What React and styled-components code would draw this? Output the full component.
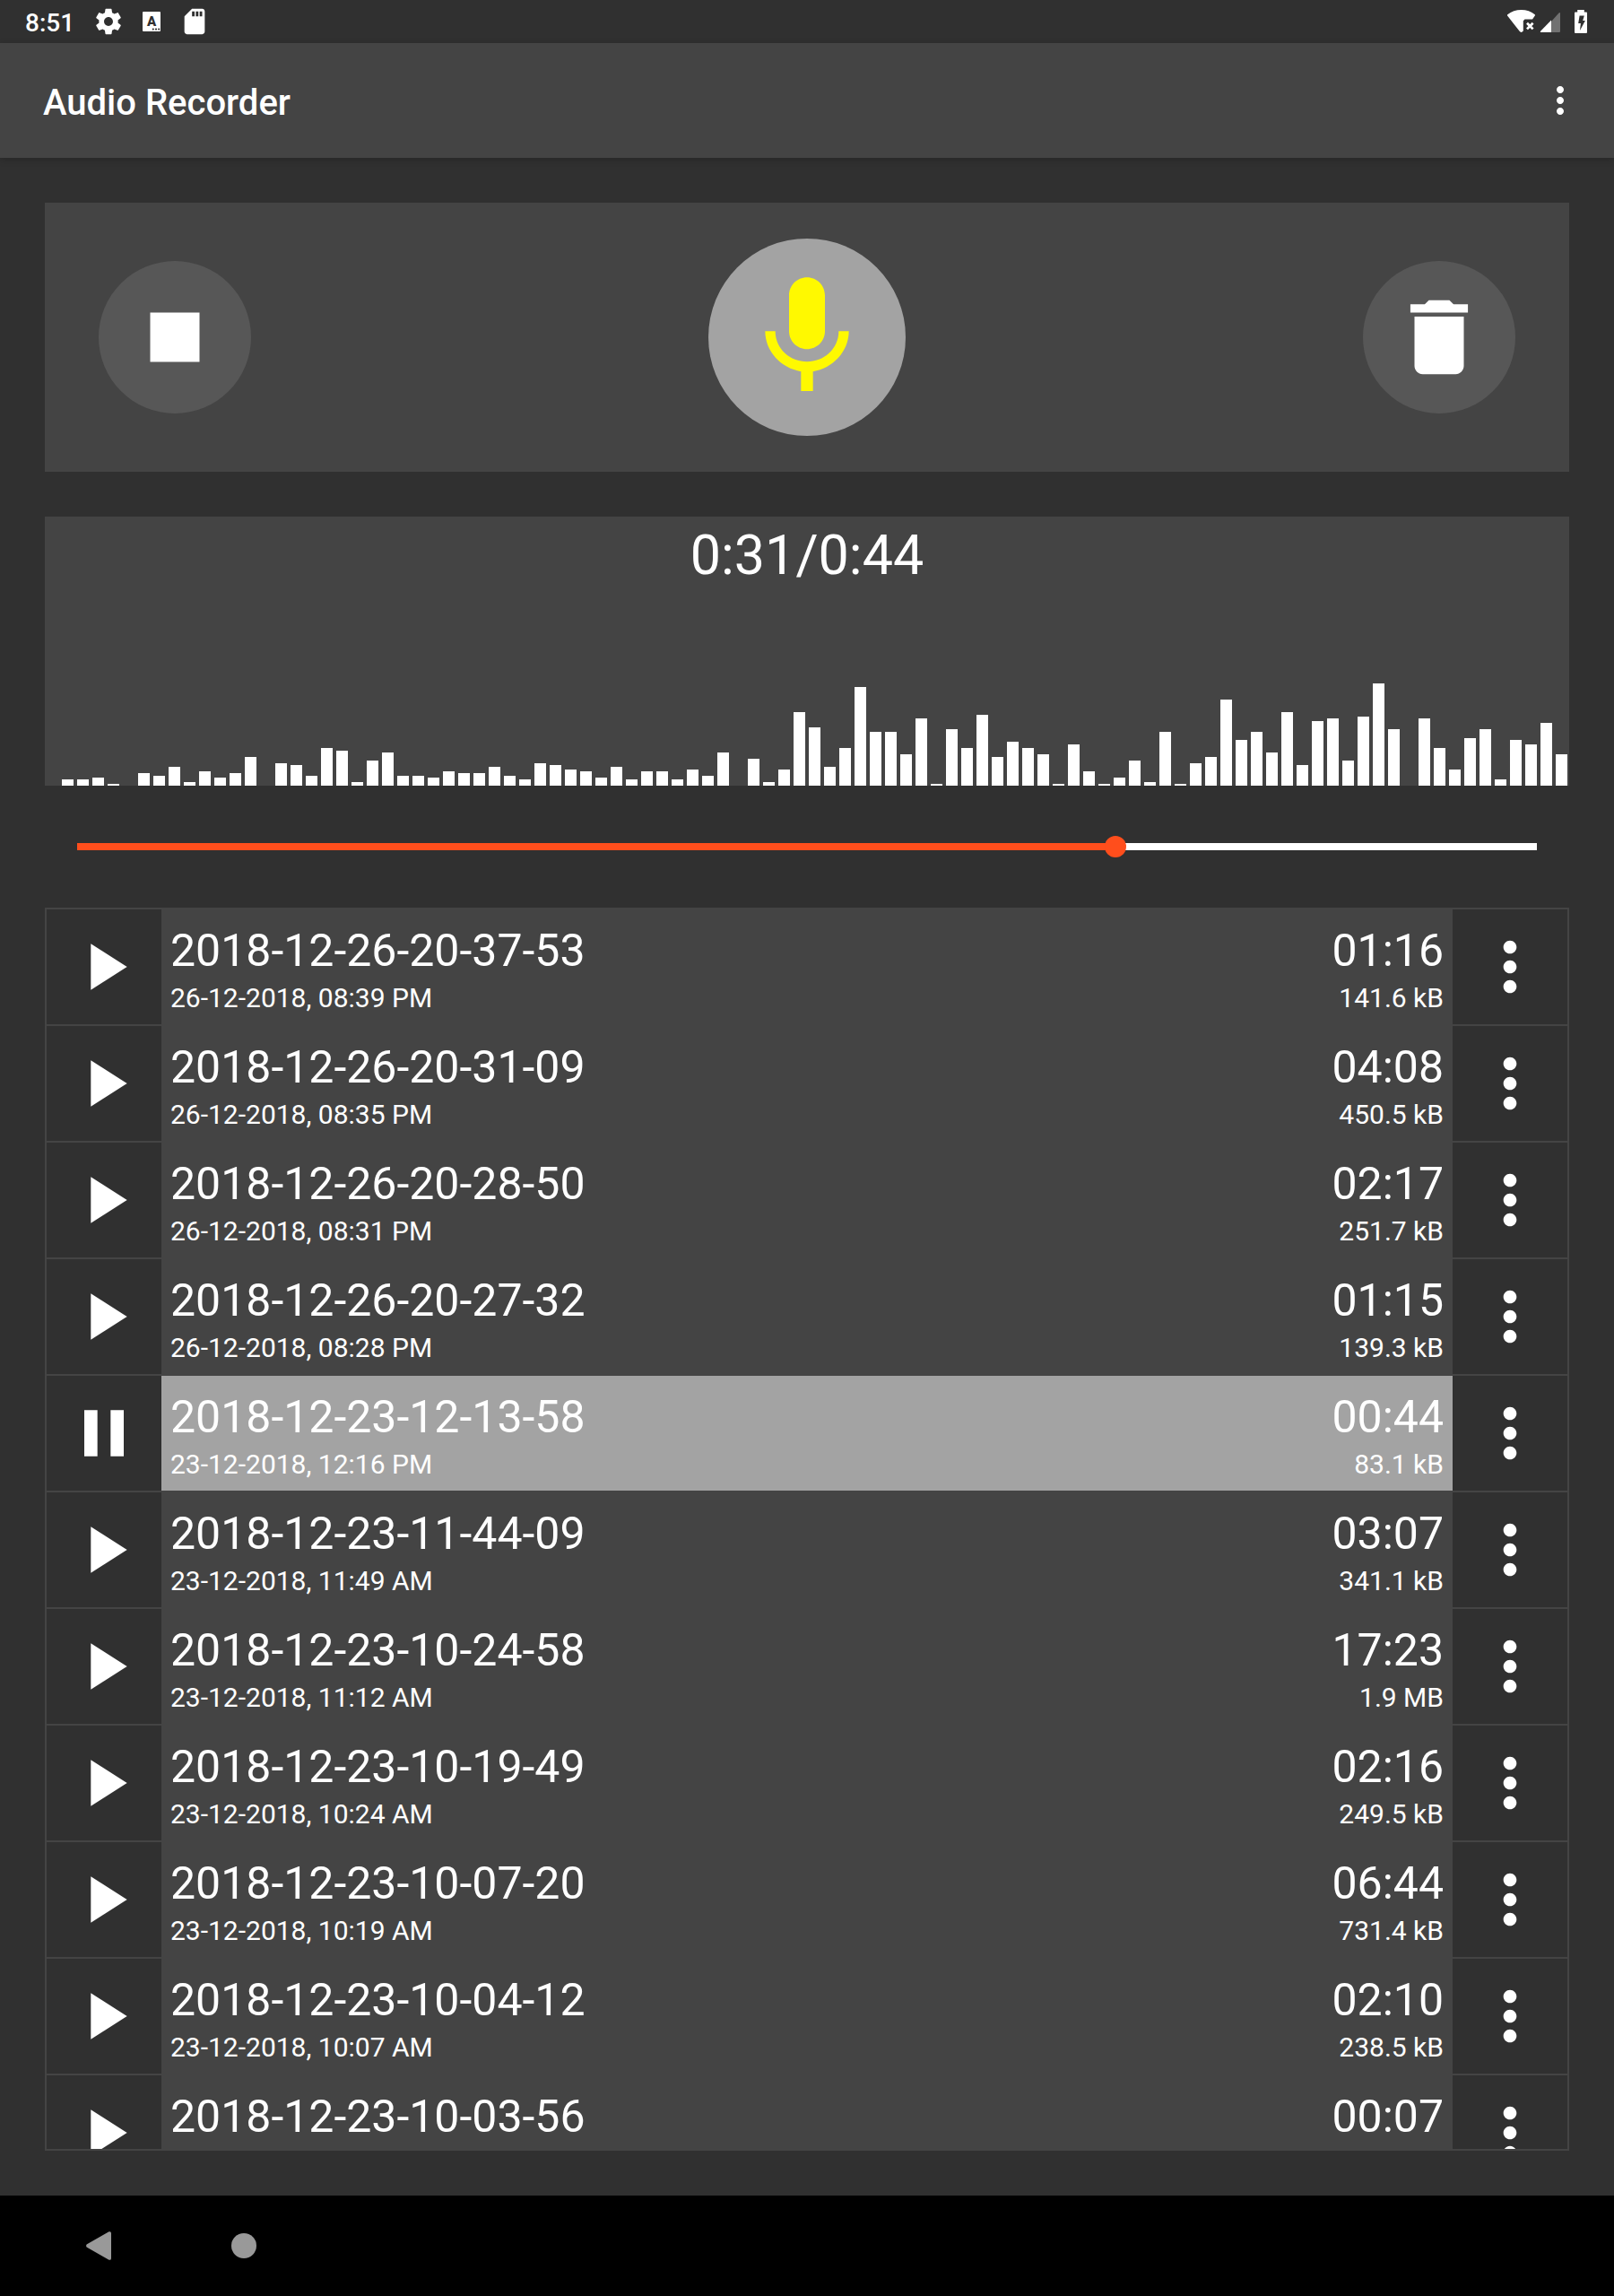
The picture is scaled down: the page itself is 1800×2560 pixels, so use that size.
import React, { useState } from "react";
import styled, { createGlobalStyle } from "styled-components";

const color = {
  page: "#303030",
  panel: "#444444",
  control: "#575757",
  active: "#a3a3a3",
  accent: "#ff4e1c",
  mic: "#fff900",
  text: "#ffffff",
};

const GlobalStyle = createGlobalStyle`
  *, *::before, *::after { box-sizing: border-box; }
  html, body { margin: 0; padding: 0; background: ${color.page}; }
  body { font-family: Roboto, "Liberation Sans", sans-serif; color: ${color.text}; }
  button { font: inherit; color: inherit; border: 0; padding: 0; margin: 0; background: none; cursor: pointer; }
  svg { display: block; }
`;

const Screen = styled.div`
  display: flex;
  flex-direction: column;
  height: 100vh;
  background: ${color.page};
`;

const StatusBar = styled.div`
  display: flex;
  align-items: center;
  justify-content: space-between;
  flex: none;
  height: 48px;
  padding: 0 20px 0 28px;
`;

const StatusGroup = styled.div`
  display: flex;
  align-items: center;
  gap: ${(p) => p.$gap}px;
`;

const Clock = styled.time`
  padding-right: 7px;
  padding-top: 3px;
  font-size: 28px;
  line-height: 32px;
  font-weight: 500;
`;

const AppBar = styled.header`
  display: flex;
  align-items: center;
  justify-content: space-between;
  flex: none;
  height: 128px;
  padding: 0 36px 0 48px;
  background: ${color.panel};
  box-shadow: 0 2px 8px rgba(0, 0, 0, 0.2);
`;

const Title = styled.h1`
  margin: 0;
  padding-top: 6px;
  font-size: 40px;
  line-height: 48px;
  font-weight: 500;
`;

const Content = styled.main`
  display: flex;
  flex-direction: column;
  flex: 1;
  min-height: 0;
  padding: 50px;
`;

const Controls = styled.section`
  display: flex;
  align-items: center;
  justify-content: space-between;
  flex: none;
  height: 300px;
  padding: 0 60px;
  background: ${color.panel};
`;

const RoundButton = styled.button`
  display: grid;
  place-items: center;
  width: ${(p) => p.$size}px;
  height: ${(p) => p.$size}px;
  border-radius: 50%;
  background: ${(p) => (p.$active ? color.active : color.control)};
  color: ${(p) => (p.$active ? color.mic : color.text)};
`;

const WavePanel = styled.section`
  display: flex;
  flex-direction: column;
  justify-content: space-between;
  flex: none;
  height: 300px;
  margin-top: 50px;
  padding: 7px 2px 0;
  background: ${color.panel};
`;

const Elapsed = styled.div`
  font-size: 61px;
  line-height: 72px;
  text-align: center;
`;

const Bars = styled.div`
  display: flex;
  align-items: flex-end;
  gap: 4px;
`;

const Bar = styled.span`
  flex: 1;
  background: ${color.text};
`;

const SeekArea = styled.div`
  display: flex;
  flex: none;
  padding: 56px 24px;
`;

const Seek = styled.input`
  appearance: none;
  width: 100%;
  height: 24px;
  margin: 0;
  background: none;
  --end: calc(12px + (100% - 24px) * var(--played));

  &::-webkit-slider-runnable-track {
    height: 8px;
    background: linear-gradient(
      to right,
      transparent 12px,
      ${color.accent} 12px,
      ${color.accent} var(--end),
      ${color.text} var(--end),
      ${color.text} calc(100% - 12px),
      transparent calc(100% - 12px)
    );
  }

  &::-webkit-slider-thumb {
    appearance: none;
    width: 24px;
    height: 24px;
    margin-top: -8px;
    border-radius: 50%;
    background: ${color.accent};
  }
`;

const List = styled.ul`
  flex: 1;
  min-height: 0;
  margin: 0;
  padding: 0;
  list-style: none;
  overflow-y: auto;
  scrollbar-width: none;
  border: 2px solid ${color.panel};
`;

const Row = styled.li`
  display: grid;
  grid-template-columns: 128px 1fr 128px;
  border-bottom: 2px solid ${color.panel};
`;

const CellButton = styled.button`
  display: grid;
  place-items: center;
  height: 128px;
`;

const Info = styled.div`
  display: flex;
  justify-content: space-between;
  padding: 16px 10px 0;
  background: ${(p) => (p.$active ? color.active : color.panel)};
`;

const Column = styled.div`
  display: flex;
  flex-direction: column;
  gap: 5px;
  text-align: ${(p) => p.$align};
`;

const Primary = styled.span`
  font-size: 50px;
  line-height: 60px;
`;

const Secondary = styled.span`
  font-size: 30px;
  line-height: 36px;
`;

const NavBar = styled.nav`
  display: flex;
  align-items: center;
  gap: 114px;
  flex: none;
  height: 112px;
  padding: 0 86px;
  background: #000000;
  color: #999999;
`;

const PATHS = {
  more: "M12 8c1.1 0 2-.9 2-2s-.9-2-2-2-2 .9-2 2 .9 2 2 2zm0 2c-1.1 0-2 .9-2 2s.9 2 2 2 2-.9 2-2-.9-2-2-2zm0 6c-1.1 0-2 .9-2 2s.9 2 2 2 2-.9 2-2-.9-2-2-2z",
  play: "M8 5v14l11-7z",
  pause: "M6 19h4V5H6v14zm8-14v14h4V5h-4z",
  stop: "M6 6h12v12H6z",
  mic: "M12 14c1.66 0 3-1.34 3-3V5c0-1.66-1.34-3-3-3S9 3.34 9 5v6c0 1.66 1.34 3 3 3zm5.3-3c0 3-2.54 5.1-5.3 5.1S6.7 14 6.7 11H5c0 3.41 2.72 6.23 6 6.72V21h2v-3.28c3.28-.48 6-3.3 6-6.72h-1.7z",
  trash: "M6 19c0 1.1.9 2 2 2h8c1.1 0 2-.9 2-2V7H6v12zM19 4h-3.5l-1-1h-5l-1 1H5v2h14V4z",
  gear: "M19.43 12.98c.04-.32.07-.64.07-.98s-.03-.66-.07-.98l2.11-1.65c.19-.15.24-.42.12-.64l-2-3.46c-.12-.22-.39-.3-.61-.22l-2.49 1c-.52-.4-1.08-.73-1.69-.98l-.38-2.65C14.46 2.18 14.25 2 14 2h-4c-.25 0-.46.18-.49.42l-.38 2.65c-.61.25-1.17.59-1.69.98l-2.49-1c-.23-.09-.49 0-.61.22l-2 3.46c-.13.22-.07.49.12.64l2.11 1.65c-.04.32-.07.65-.07.98s.03.66.07.98l-2.11 1.65c-.19.15-.24.42-.12.64l2 3.46c.12.22.39.3.61.22l2.49-1c.52.4 1.08.73 1.69.98l.38 2.65c.03.24.24.42.49.42h4c.25 0 .46-.18.49-.42l.38-2.65c.61-.25 1.17-.59 1.69-.98l2.49 1c.23.09.49 0 .61-.22l2-3.46c.12-.22.07-.49-.12-.64l-2.11-1.65zM12 15.5c-1.93 0-3.5-1.57-3.5-3.5s1.57-3.5 3.5-3.5 3.5 1.57 3.5 3.5-1.57 3.5-3.5 3.5z",
  sd: "M18 2h-8L4.02 8 4 20c0 1.1.9 2 2 2h12c1.1 0 2-.9 2-2V4c0-1.1-.9-2-2-2zm-6 6h-2V4h2v4zm3 0h-2V4h2v4zm3 0h-2V4h2v4z",
};

const Icon = ({ name, size }) => (
  <svg width={size} height={size} viewBox="0 0 24 24" fill="currentColor" aria-hidden="true">
    <path d={PATHS[name]} />
  </svg>
);

const KeyboardIcon = () => (
  <svg width="34" height="34" viewBox="0 0 34 34" aria-hidden="true">
    <rect x="7" y="6" width="20" height="22" rx="1" fill="#fff" />
    <text x="17" y="22" textAnchor="middle" fontFamily="Roboto, sans-serif" fontWeight="900" fontSize="15" fill="#303030">A</text>
    <g fill="#303030">
      <circle cx="18.8" cy="25.6" r="1.1" />
      <circle cx="22" cy="25.6" r="1.1" />
      <circle cx="25.2" cy="25.6" r="1.1" />
    </g>
  </svg>
);

const WifiIcon = () => (
  <svg width="34" height="34" viewBox="0 0 34 34" aria-hidden="true">
    <path d="M3.2 9.2C7.5 5.8 12.8 4 18.6 4s11.1 1.8 15.2 5.2q.4.6 0 1.2L31 14.6H22.5L20.8 16.3V27.6q-2.3 2.8-4.4 0L3.1 10.4q-.4-.6.1-1.2z" fill="#fff" />
    <path d="M25 18.8l6.6 6.6M31.6 18.8L25 25.4" stroke="#fff" strokeWidth="2.7" />
  </svg>
);

const SignalIcon = () => (
  <svg width="34" height="34" viewBox="0 0 34 34" aria-hidden="true">
    <path d="M18 17L26.5 7.5Q28 6.300 28 8V28q0 1-1 1h-9z" fill="#717171" />
    <path d="M18 15.500V29H7q-2-.2-.7-1.600z" fill="#fff" />
  </svg>
);

const BatteryIcon = () => (
  <svg width="34" height="34" viewBox="0 0 34 34" aria-hidden="true">
    <path d="M13.200 4h7.600v2.400H23q1 0 1 1V29q0 1-1 1H11q-1 0-1-1V7.400q0-1 1-1h2.200z" fill="#fff" />
    <path d="M15.600 10.600h5.200L19.200 16h2.700L16 27l.9-8h-2.700z" fill="#303030" />
  </svg>
);

const LEVELS = [
  0, 7, 7, 9, 2, 0, 14, 11, 21, 4, 16, 9, 14, 32, 0, 25, 23, 11, 42, 39,
  4, 28, 37, 11, 11, 9, 16, 14, 14, 21, 11, 7, 25, 23, 18, 16, 9, 21, 7, 16,
  16, 7, 18, 11, 37, 0, 30, 4, 18, 82, 65, 21, 42, 110, 60, 60, 35, 75, 2, 63,
  42, 79, 32, 49, 42, 35, 2, 46, 16, 2, 9, 28, 4, 60, 2, 25, 32, 96, 51, 60,
  37, 82, 23, 72, 75, 28, 77, 114, 63, 0, 75, 42, 18, 53, 63, 7, 51, 46, 70, 35,
];

const RECORDINGS = [
  { name: "2018-12-26-20-37-53", date: "26-12-2018, 08:39 PM", length: "01:16", size: "141.6 kB" },
  { name: "2018-12-26-20-31-09", date: "26-12-2018, 08:35 PM", length: "04:08", size: "450.5 kB" },
  { name: "2018-12-26-20-28-50", date: "26-12-2018, 08:31 PM", length: "02:17", size: "251.7 kB" },
  { name: "2018-12-26-20-27-32", date: "26-12-2018, 08:28 PM", length: "01:15", size: "139.3 kB" },
  { name: "2018-12-23-12-13-58", date: "23-12-2018, 12:16 PM", length: "00:44", size: "83.1 kB" },
  { name: "2018-12-23-11-44-09", date: "23-12-2018, 11:49 AM", length: "03:07", size: "341.1 kB" },
  { name: "2018-12-23-10-24-58", date: "23-12-2018, 11:12 AM", length: "17:23", size: "1.9 MB" },
  { name: "2018-12-23-10-19-49", date: "23-12-2018, 10:24 AM", length: "02:16", size: "249.5 kB" },
  { name: "2018-12-23-10-07-20", date: "23-12-2018, 10:19 AM", length: "06:44", size: "731.4 kB" },
  { name: "2018-12-23-10-04-12", date: "23-12-2018, 10:07 AM", length: "02:10", size: "238.5 kB" },
  { name: "2018-12-23-10-03-56", length: "00:07" },
];

const DURATION = 44;

const clock = (seconds) => `0:${String(Math.floor(seconds)).padStart(2, "0")}`;

const Recording = ({ item, playing, onToggle }) => (
  <Row>
    <CellButton type="button" aria-label={playing ? "Pause" : "Play"} onClick={onToggle}>
      <Icon name={playing ? "pause" : "play"} size={88} />
    </CellButton>
    <Info $active={playing}>
      <Column $align="left">
        <Primary>{item.name}</Primary>
        {item.date && <Secondary>{item.date}</Secondary>}
      </Column>
      <Column $align="right">
        <Primary>{item.length}</Primary>
        {item.size && <Secondary>{item.size}</Secondary>}
      </Column>
    </Info>
    <CellButton type="button" aria-label="More">
      <Icon name="more" size={88} />
    </CellButton>
  </Row>
);

export default function App() {
  const [position, setPosition] = useState(31.3);
  const [current, setCurrent] = useState(4);

  return (
    <Screen>
      <GlobalStyle />
      <StatusBar>
        <StatusGroup $gap={14}>
          <Clock>8:51</Clock>
          <Icon name="gear" size={34} />
          <KeyboardIcon />
          <Icon name="sd" size={34} />
        </StatusGroup>
        <StatusGroup $gap={0}>
          <WifiIcon />
          <SignalIcon />
          <BatteryIcon />
        </StatusGroup>
      </StatusBar>
      <AppBar>
        <Title>Audio Recorder</Title>
        <button type="button" aria-label="Menu">
          <Icon name="more" size={48} />
        </button>
      </AppBar>
      <Content>
        <Controls>
          <RoundButton type="button" aria-label="Stop" $size={170}>
            <Icon name="stop" size={110} />
          </RoundButton>
          <RoundButton type="button" aria-label="Record" $size={220} $active>
            <Icon name="mic" size={160} />
          </RoundButton>
          <RoundButton type="button" aria-label="Delete" $size={170}>
            <Icon name="trash" size={110} />
          </RoundButton>
        </Controls>
        <WavePanel>
          <Elapsed>{clock(position)}/{clock(DURATION)}</Elapsed>
          <Bars>
            {LEVELS.map((level, i) => (
              <Bar key={i} style={{ height: level }} />
            ))}
          </Bars>
        </WavePanel>
        <SeekArea>
          <Seek
            type="range"
            aria-label="Position"
            min="0"
            max={DURATION}
            step="0.1"
            value={position}
            onChange={(e) => setPosition(Number(e.target.value))}
            style={{ "--played": position / DURATION }}
          />
        </SeekArea>
        <List>
          {RECORDINGS.map((item, i) => (
            <Recording
              key={item.name}
              item={item}
              playing={i === current}
              onToggle={() => setCurrent(i === current ? -1 : i)}
            />
          ))}
        </List>
      </Content>
      <NavBar>
        <button type="button" aria-label="Back">
          <svg width="48" height="48" viewBox="0 0 48 48" fill="currentColor" aria-hidden="true">
            <path d="M10.600 22.600L35.500 8.300Q38 7.600 38 10V38q0 2.400-2.500 1.700L10.600 25.400q-1.200-1.400 0-2.800z" />
          </svg>
        </button>
        <button type="button" aria-label="Home">
          <svg width="48" height="48" viewBox="0 0 48 48" fill="currentColor" aria-hidden="true">
            <circle cx="24" cy="24" r="14" />
          </svg>
        </button>
      </NavBar>
    </Screen>
  );
}
